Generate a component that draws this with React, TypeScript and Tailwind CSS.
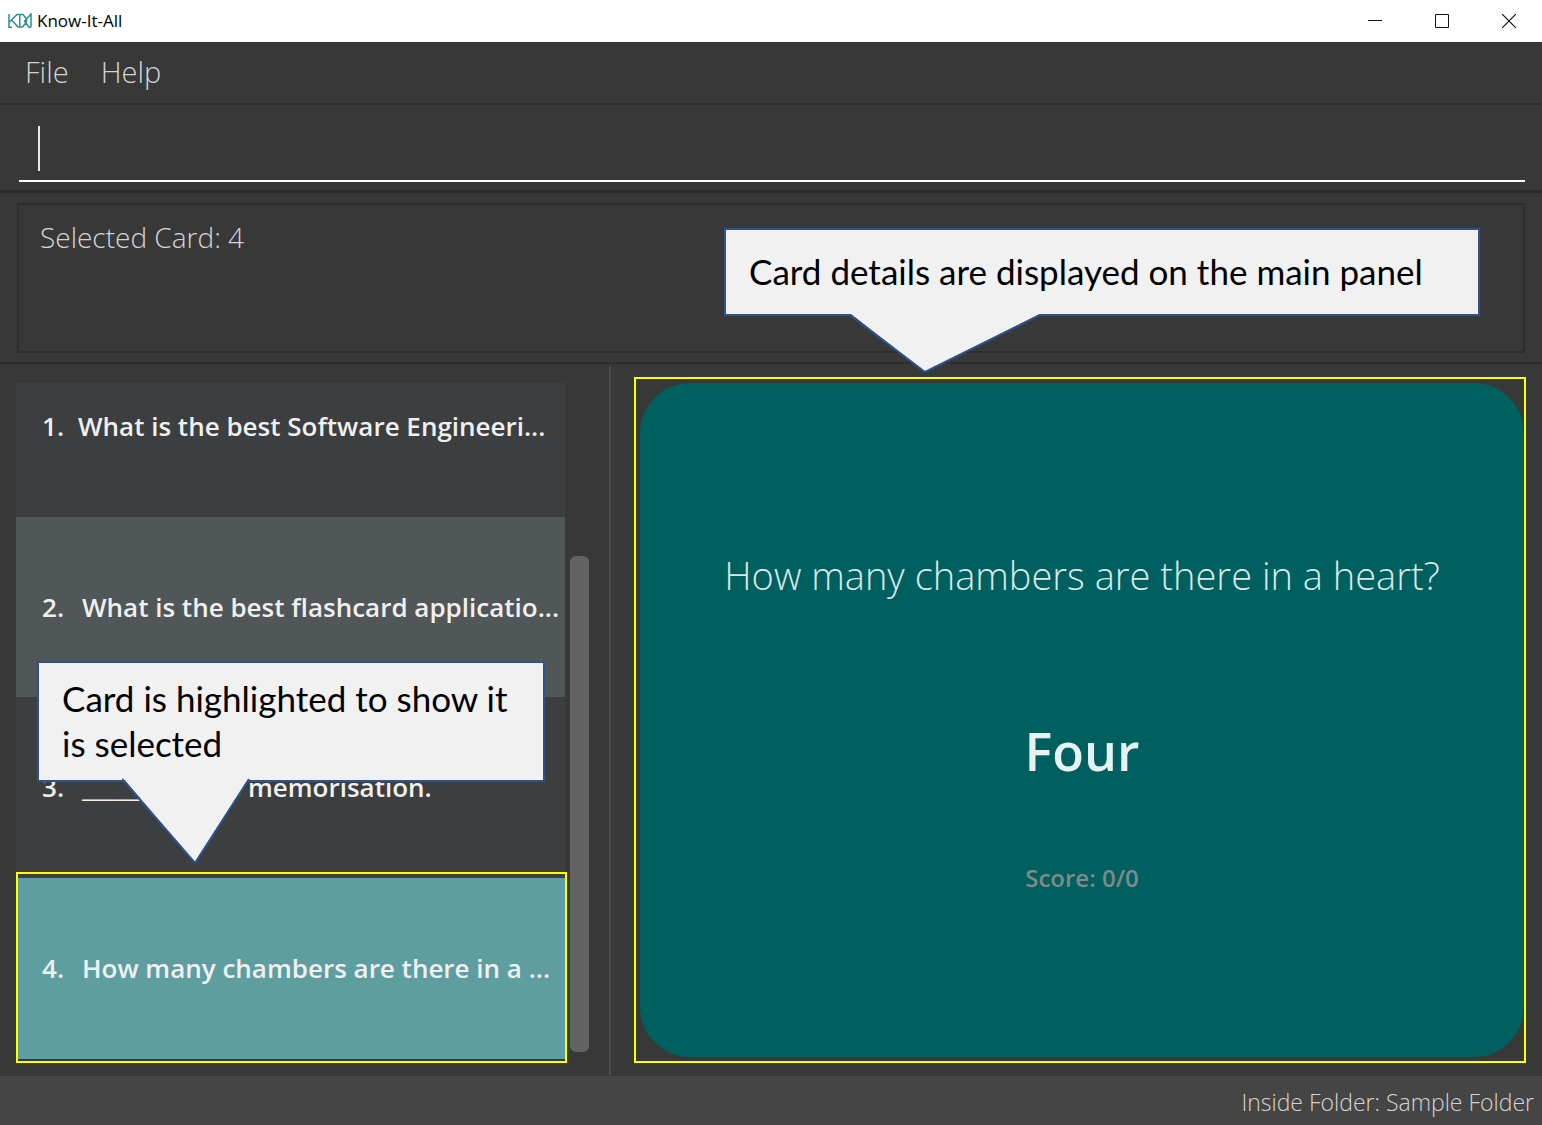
import React from "react";

const segoe = "font-['Open_Sans','Noto_Sans',sans-serif]";
const lato = "font-['Lato','Open_Sans',sans-serif]";

const cards = [
  { id: 1, text: "What is the best Software Engineeri...", row: "h-[134px] gap-[14px] pb-[47px] bg-[#3c3e3f]" },
  { id: 2, text: "What is the best flashcard applicatio...", row: "h-[180px] gap-[18px] bg-[#515658]" },
  { id: 3, text: "____________ is memorisation.", row: "h-[181px] gap-[18px] bg-[#3c3e3f]" },
  { id: 4, text: "How many chambers are there in a ...", row: "h-[181px] gap-[18px] bg-[#5f9ea0]" },
];

function Logo() {
  return (
    <svg width="24" height="16" viewBox="0 0 24 16" fill="none" stroke="#2a9390" strokeWidth="1.5" aria-hidden="true">
      <path d="M1 1V14.3H4M1.5 9L9 1.5H15L18.5 6V9L14.5 14H10L4 7.5M11.8 1.5V14M23 14.3V1L16.5 8L21 14.3H23" />
    </svg>
  );
}

function TitleBar() {
  return (
    <header className="flex h-[42px] items-center justify-between bg-white pl-2 text-black">
      <div className="flex items-center gap-[5px]">
        <Logo />
        <h1 className="text-[17px] leading-6">Know-It-All</h1>
      </div>
      <div className="flex h-full">
        <button aria-label="Minimize" className="flex w-[67px] items-center justify-center">
          <svg width="14" height="14" stroke="#111"><path d="M0 6.5H14" /></svg>
        </button>
        <button aria-label="Maximize" className="flex w-[67px] items-center justify-center">
          <svg width="14" height="14" fill="none" stroke="#111"><path d="M0.5 0.5H13.5V13.5H0.5Z" /></svg>
        </button>
        <button aria-label="Close" className="flex w-[67px] items-center justify-center">
          <svg width="14" height="14" stroke="#111" strokeWidth="1.2"><path d="M0 0L14 14M14 0L0 14" /></svg>
        </button>
      </div>
    </header>
  );
}

export default function App() {
  return (
    <div className={`flex min-h-screen flex-col bg-[#383838] text-[#d4d4d4] ${segoe}`}>
      <TitleBar />

      <nav className="flex h-[63px] items-center gap-8 border-b-2 border-[#2e2e2e] px-[25px] pb-[2px] text-[29px] font-light">
        <button>File</button>
        <button>Help</button>
      </nav>

      <div className="relative h-[88px] border-b-[3px] border-[#2d2d2d] pr-[17px] pl-[19px]">
        <input
          aria-label="Command"
          className="h-[77px] w-full border-b-2 border-white bg-transparent px-5 text-[28px] font-light caret-transparent outline-none"
        />
        <span className="absolute top-[21px] left-[38px] h-[45px] w-[2px] bg-[#e8e8e8]" />
      </div>

      <section className="relative z-10 border-b-2 border-[#2e2e2e] px-[17px] pt-[10px] pb-[9px]">
        <p className="h-[150px] border-2 border-[#2e2e2e] px-[21px] py-[12px] text-[28px] leading-10 font-light">
          Selected Card: 4
        </p>
        <div className={`absolute top-[35px] right-[62px] w-[756px] text-black ${lato}`}>
          <div className="border-2 border-[#2f528f] bg-[#f1f1f1] px-[23px] pt-[18px] pb-[20px] text-[35px] leading-[46px] whitespace-nowrap">
            Card details are displayed on the main panel
          </div>
          <svg className="absolute top-[86px] left-[126px]" width="190" height="60" fill="#f1f1f1" aria-hidden="true">
            <path d="M1 0L75 58L190 0Z" />
            <path d="M0 1L75 58L190 1" fill="none" stroke="#2f528f" strokeWidth="2" />
          </svg>
        </div>
      </section>

      <main className="grid flex-1 grid-cols-[609fr_2px_931fr]">
        <div className="flex gap-[5px] pt-[19px] pr-5 pb-[17px] pl-4">
          <div className="relative flex-1">
            <ol className="flex h-[676px] flex-col text-[26px] font-semibold text-[#f0f0f0]">
              {cards.map((c) => (
                <li key={c.id} className={`flex items-center pl-[26px] whitespace-nowrap ${c.row}`}>
                  <span>{c.id}.</span>
                  <span>{c.text}</span>
                </li>
              ))}
            </ol>
            <div className={`absolute top-[278px] left-[21px] w-[508px] text-black ${lato}`}>
              <div className="border-2 border-[#2f528f] bg-[#f1f1f1] pt-[13px] pr-[23px] pb-[14px] pl-[23px] text-[35px] leading-[45px]">
                Card is highlighted to show it is selected
              </div>
              <svg className="absolute top-[117px] left-[85px]" width="128" height="88" fill="#f1f1f1" aria-hidden="true">
                <path d="M1 0L73 85L127 0Z" />
                <path d="M0 1L73 85L127 1" fill="none" stroke="#2f528f" strokeWidth="2" />
              </svg>
            </div>
            <div className="absolute top-[489px] -right-[2px] left-0 h-[191px] border-2 border-[#ffff00]" />
          </div>
          <div className="mt-[173px] h-[496px] w-[19px] rounded-md bg-[#636363]" />
        </div>
        <div className="mt-[2px] mb-px bg-[#4c4c4c]" />
        <div className="pt-[13px] pr-4 pb-[13px] pl-[23px]">
          <article className="h-full border-2 border-[#ffff00] pt-1 pb-1 pl-1">
            <div className="flex h-full flex-col items-center rounded-[50px] bg-[#005f5f] pt-[162px] text-center">
              <h2 className="text-[38px] leading-[60px] font-light text-[#d9e7e7]">How many chambers are there in a heart?</h2>
              <p className="mt-[106px] text-[52px] leading-[80px] font-semibold text-[#e8f1f1]">Four</p>
              <p className="mt-[67px] text-[24px] leading-[40px] font-semibold text-[#7f8a8a]">Score: 0/0</p>
            </div>
          </article>
        </div>
      </main>

      <footer className="flex h-[49px] items-center justify-end bg-[#454545] pt-[3px] pr-2 text-[23px] font-light">
        Inside Folder: Sample Folder
      </footer>
    </div>
  );
}
